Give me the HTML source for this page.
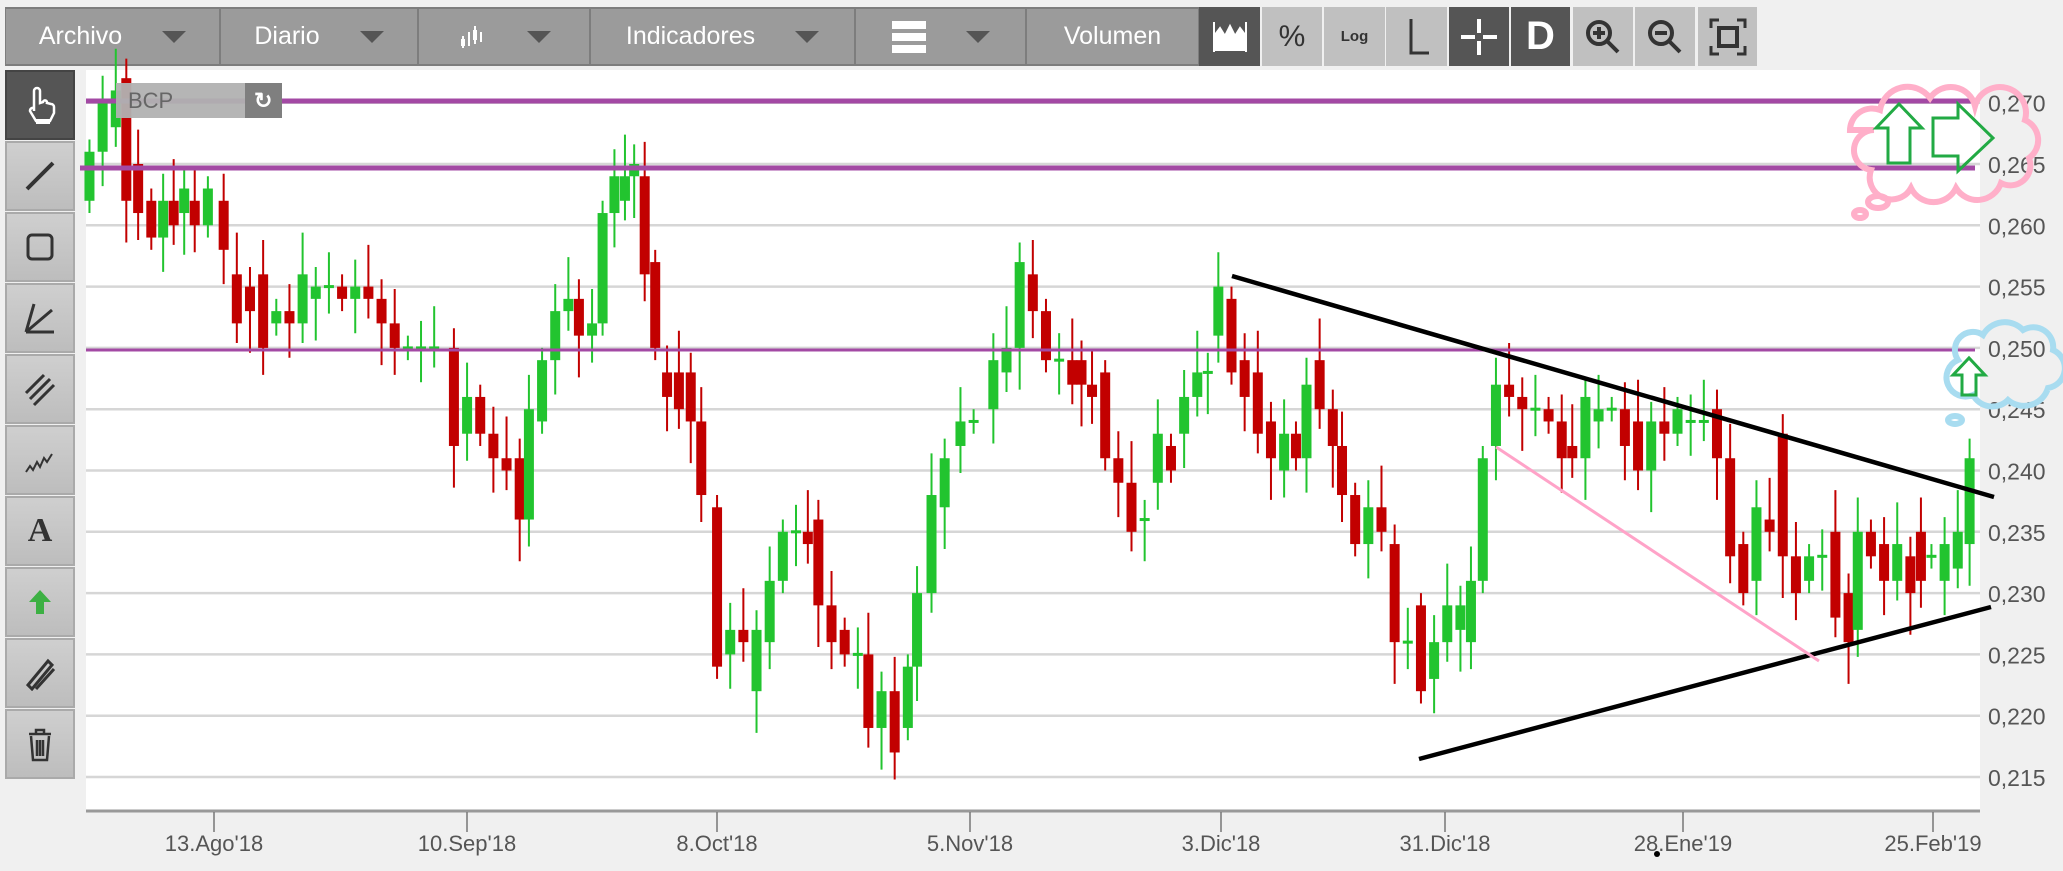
<!DOCTYPE html>
<html><head><meta charset="utf-8"><style>
*{margin:0;padding:0;box-sizing:border-box}
body{width:2063px;height:871px;background:#f0f0f0;font-family:"Liberation Sans",Arial,sans-serif;position:relative;overflow:hidden}
.tb{position:absolute;top:7px;height:59px;display:flex;align-items:center;justify-content:center;color:#fff;font-size:25px}
.m{background:#9b9b9b;border:2px solid #7d7d7d;border-left-width:1px;border-right-width:1px}
.l{background:#c0c0c0}
.d{background:#555}
.tri{display:inline-block;width:0;height:0;border-left:12px solid transparent;border-right:12px solid transparent;border-top:12px solid #555;margin-left:40px}
.sb{position:absolute;left:5px;width:70px;height:70px;background:linear-gradient(#cfcfcf,#bdbdbd);border:2px solid #aaa;display:flex;align-items:center;justify-content:center}
</style></head><body>
<div class="tb m" style="left:5px;width:215px">Archivo<span class="tri"></span></div>
<div class="tb m" style="left:220px;width:198px">Diario<span class="tri"></span></div>
<div class="tb m" style="left:418px;width:172px"><svg width="30" height="30" viewBox="0 0 30 30"><g stroke="#fff" stroke-width="2"><line x1="6" y1="14" x2="6" y2="26"/><line x1="12" y1="10" x2="12" y2="24"/><line x1="18" y1="4" x2="18" y2="22"/><line x1="24" y1="10" x2="24" y2="20"/></g><rect x="4" y="17" width="4" height="7" fill="#fff"/><rect x="16" y="8" width="4" height="10" fill="#fff"/></svg><span class="tri"></span></div>
<div class="tb m" style="left:590px;width:265px">Indicadores<span class="tri"></span></div>
<div class="tb m" style="left:855px;width:171px"><svg width="34" height="36"><rect x="0" y="2" width="34" height="8" fill="#fff"/><rect x="0" y="14" width="34" height="8" fill="#fff"/><rect x="0" y="26" width="34" height="8" fill="#fff"/></svg><span class="tri"></span></div>
<div class="tb m" style="left:1026px;width:173px">Volumen</div>
<div class="tb d" style="left:1199px;width:61px"><svg width="40" height="34" viewBox="0 0 40 34"><path d="M4 2v30M36 2v30M4 16l6-8 5 8 5-10 5 10 5-8 6 8v14H4z" stroke="#fff" stroke-width="2" fill="#fff"/></svg></div>
<div class="tb l" style="left:1262px;width:60px;color:#333;font-size:30px">%</div>
<div class="tb l" style="left:1324px;width:61px;color:#333;font-size:15px;font-weight:bold">Log</div>
<div class="tb l" style="left:1386px;width:61px"><svg width="30" height="40"><path d="M9 2v34h18" stroke="#333" stroke-width="3" fill="none"/></svg></div>
<div class="tb d" style="left:1449px;width:60px"><svg width="40" height="40"><path d="M20 2v14M20 24v14M2 20h14M24 20h14" stroke="#fff" stroke-width="4"/></svg></div>
<div class="tb d" style="left:1511px;width:59px;font-size:40px;font-weight:bold">D</div>
<div class="tb l" style="left:1573px;width:60px"><svg width="40" height="40"><circle cx="16" cy="16" r="11" stroke="#333" stroke-width="4" fill="none"/><path d="M24 24l11 11M10 16h12M16 10v12" stroke="#333" stroke-width="4"/></svg></div>
<div class="tb l" style="left:1635px;width:60px"><svg width="40" height="40"><circle cx="16" cy="16" r="11" stroke="#333" stroke-width="4" fill="none"/><path d="M24 24l11 11M10 16h12" stroke="#333" stroke-width="4"/></svg></div>
<div class="tb l" style="left:1698px;width:59px"><svg width="40" height="40"><path d="M3 11V3h8M29 3h8v8M37 29v8h-8M11 37H3v-8" stroke="#333" stroke-width="3" fill="none"/><rect x="11" y="11" width="18" height="18" stroke="#333" stroke-width="4" fill="none"/></svg></div>

<div class="sb" style="top:70px;background:#555;border-color:#444"><svg width="36" height="40"><path d="M12 26V6a3 3 0 016 0v12l3-1a2 2 0 014 1l4 1a3 3 0 013 3v6l-4 8H14l-6-10a3 3 0 014-3z" stroke="#fff" stroke-width="2.5" fill="none"/><rect x="14" y="34" width="14" height="5" fill="#fff"/></svg></div>
<div class="sb" style="top:141px"><svg width="36" height="36"><path d="M5 31L31 5" stroke="#333" stroke-width="4"/></svg></div>
<div class="sb" style="top:212px"><svg width="36" height="36"><rect x="6" y="6" width="24" height="24" rx="4" stroke="#333" stroke-width="3" fill="none"/></svg></div>
<div class="sb" style="top:283px"><svg width="36" height="36"><path d="M4 32h28M4 32L12 4M4 32L30 10" stroke="#333" stroke-width="3" fill="none"/></svg></div>
<div class="sb" style="top:354px"><svg width="36" height="36"><path d="M4 22L22 4M8 28L28 8M12 34L32 14" stroke="#333" stroke-width="3"/></svg></div>
<div class="sb" style="top:425px"><svg width="36" height="36"><path d="M4 30l4-6 3 4 4-8 3 5 4-9 3 4 5-8" stroke="#333" stroke-width="2" fill="none"/></svg></div>
<div class="sb" style="top:496px;font:bold 34px 'Liberation Serif',serif;color:#333">A</div>
<div class="sb" style="top:567px"><svg width="30" height="30"><path d="M15 3L4 15h7v12h8V15h7z" fill="#3cb043"/></svg></div>
<div class="sb" style="top:638px"><svg width="36" height="36"><path d="M6 30L26 6l4 4L10 34zM14 34L32 14" stroke="#333" stroke-width="3" fill="none"/></svg></div>
<div class="sb" style="top:709px"><svg width="30" height="36"><path d="M4 8h22M11 8V4h8v4M6 10l2 24h14l2-24M12 14v16M15 14v16M18 14v16" stroke="#333" stroke-width="2.5" fill="none"/></svg></div>

<svg id="ch" style="position:absolute;left:0;top:0" width="2063" height="871"></svg>
<script>
var s=document.getElementById('ch'),h='';
function Y(p){return 777-(p-0.215)/0.005*61.3}
h+='<rect x="86" y="70" width="1894" height="740" fill="#fff"/>';
for(var i=0;i<=11;i++){var p=0.215+i*0.005,y=Y(p);h+='<line x1="86" y1="'+y+'" x2="1980" y2="'+y+'" stroke="#d6d6d6" stroke-width="2.5"/>';h+='<text x="1988" y="'+(y+9)+'" font-size="23" fill="#555" font-family="Liberation Sans">'+p.toFixed(3).replace('.',',')+'</text>';}
h+='<line x1="86" y1="811" x2="1980" y2="811" stroke="#999" stroke-width="3"/>';
var tk=[[214,'13.Ago\'18'],[467,'10.Sep\'18'],[717,'8.Oct\'18'],[970,'5.Nov\'18'],[1221,'3.Dic\'18'],[1445,'31.Dic\'18'],[1683,'28.Ene\'19'],[1933,'25.Feb\'19']];
tk.forEach(function(t){h+='<line x1="'+t[0]+'" y1="812" x2="'+t[0]+'" y2="832" stroke="#777" stroke-width="1.5"/><text x="'+t[0]+'" y="851" text-anchor="middle" font-size="22" fill="#555" font-family="Liberation Sans">'+t[1]+'</text>';});
var d=[[68,262,266],[78,266,270],[88,268,271],[96,272,262],[105,265,261],[115,262,259],[124,259,262],[132,262,260],[140,261,263],[148,262,260],[158,260,263],[170,262,258],[180,256,252],[190,255,253],[200,256,250],[210,252,253],[220,253,252],[230,252,256],[240,254,255],[250,255,255],[260,255,254],[270,254,255],[280,255,254],[290,254,252],[300,252,250],[310,250,250],[320,250,250],[330,250,250],[345,250,242],[355,243,246],[365,246,243],[375,243,241],[385,241,240],[395,241,236],[402,236,245],[412,244,249],[422,249,253],[432,253,254],[440,254,251],[450,251,252],[458,252,261],[467,261,264],[475,262,264],[482,264,265],[490,264,256],[498,257,250],[507,248,246],[516,248,245],[525,248,244],[533,244,238],[545,237,224],[555,225,227],[565,227,226],[575,222,227],[585,226,231],[595,231,235],[605,235,235],[614,235,234],[622,236,229],[632,229,226],[642,227,225],[652,225,225],[660,225,219],[670,219,222],[680,222,217],[690,219,224],[697,224,230],[708,230,238],[718,237,241],[730,242,244],[740,244,244],[755,245,249],[765,248,250],[775,250,257],[785,256,253],[795,253,249],[805,249,249],[815,249,247],[822,249,247],[830,247,246],[840,248,241],[850,241,239],[860,239,235],[870,236,236],[880,239,243],[890,242,240],[900,243,246],[910,246,248],[918,248,248],[926,251,255],[936,254,248],[946,249,246],[956,248,243],[966,244,241],[976,240,243],[985,243,241],[993,241,247],[1003,249,245],[1013,245,242],[1020,242,238],[1030,238,234],[1040,234,237],[1050,237,235],[1060,234,226],[1070,226,226],[1080,229,222],[1090,223,226],[1100,226,229],[1110,227,229],[1118,226,231],[1127,231,241],[1137,242,247],[1147,247,246],[1157,246,245],[1167,245,245],[1177,245,244],[1187,244,241],[1195,242,241],[1205,241,246],[1215,244,245],[1225,245,245],[1235,245,242],[1245,244,240],[1255,240,244],[1265,244,243],[1275,243,245],[1285,244,244],[1295,244,244],[1305,245,241],[1315,241,233],[1325,234,230],[1335,231,237],[1345,236,235],[1355,243,233],[1365,233,230],[1375,231,233],[1385,233,233],[1395,235,228],[1405,230,226],[1412,227,235],[1422,235,233],[1432,234,231],[1442,231,234],[1452,233,230],[1460,235,231],[1468,233,233],[1478,231,234],[1488,232,235],[1497,234,241]];
var k=1.3157;
d.forEach(function(c,i){var x=c[0]*k,o=c[1]/1000,cl=c[2]/1000,up=cl>=o,col=up?'#22c42f':'#c20000';
var hi=Math.max(o,cl)+0.001+((i*7)%5)*0.0006,lo=Math.min(o,cl)-0.001-((i*3)%5)*0.0006;
h+='<line x1="'+x+'" y1="'+Y(hi)+'" x2="'+x+'" y2="'+Y(lo)+'" stroke="'+col+'" stroke-width="2"/>';
var y1=Y(Math.max(o,cl)),y2=Y(Math.min(o,cl));if(y2-y1<3){y1-=1.5;y2=y1+3;}
h+='<rect x="'+(x-5)+'" y="'+y1+'" width="10" height="'+(y2-y1)+'" fill="'+col+'"/>';});
h+='<line x1="86" y1="101" x2="1975" y2="101" stroke="#a349a4" stroke-width="5"/>';
h+='<line x1="80" y1="168" x2="1975" y2="168" stroke="#a349a4" stroke-width="5"/>';
h+='<line x1="86" y1="350" x2="1975" y2="350" stroke="#a349a4" stroke-width="3"/>';
h+='<line x1="1232" y1="276" x2="1994" y2="497" stroke="#000" stroke-width="4.5"/>';
h+='<line x1="1419" y1="759" x2="1991" y2="607" stroke="#000" stroke-width="4.5"/>';
h+='<line x1="1496" y1="447" x2="1819" y2="661" stroke="#ffa3c8" stroke-width="3"/>';
h+='<rect x="116" y="83" width="129" height="35" fill="#b1b1b1" opacity="0.95"/><text x="128" y="108" font-size="22" fill="#666" font-family="Liberation Sans">BCP</text><rect x="245" y="83" width="37" height="35" fill="#7f7f7f"/><text x="254" y="108" font-size="22" fill="#fff" font-weight="bold">↻</text>';
h+='<g fill="none" stroke="#ffafc9" stroke-width="6"><path d="M1850 130a22 22 0 0130-20a28 28 0 0150-12a25 25 0 0145 8a22 22 0 0150 14a22 22 0 014 38a20 20 0 01-28 25a25 25 0 01-45 5a25 25 0 01-45 0a22 22 0 01-40-18a20 20 0 01-10-35a20 20 0 0113 -5z"/><ellipse cx="1878" cy="202" rx="10" ry="6"/><ellipse cx="1860" cy="214" rx="6" ry="4"/></g>';
h+='<g fill="none" stroke="#22aa44" stroke-width="3"><path d="M1888 163v-35h-12l23-24 23 24h-12v35z"/><path d="M1933 118h25v-14l35 34-35 33v-15h-25z"/></g>';
h+='<g fill="none" stroke="#a8dcf0" stroke-width="6"><path d="M1958 360a18 18 0 0125-25a25 25 0 0140-5a20 20 0 0130 20a20 20 0 01-5 38a25 25 0 01-40 12a22 22 0 01-35-5a18 18 0 01-15-35z"/><ellipse cx="1955" cy="420" rx="7" ry="4"/></g>';
h+='<path d="M1962 395v-20h-9l16-17 16 17h-9v20z" fill="none" stroke="#22aa44" stroke-width="3"/>';
h+='<circle cx="1657" cy="854" r="3" fill="#000"/>';
s.innerHTML=h;
</script>
</body></html>
